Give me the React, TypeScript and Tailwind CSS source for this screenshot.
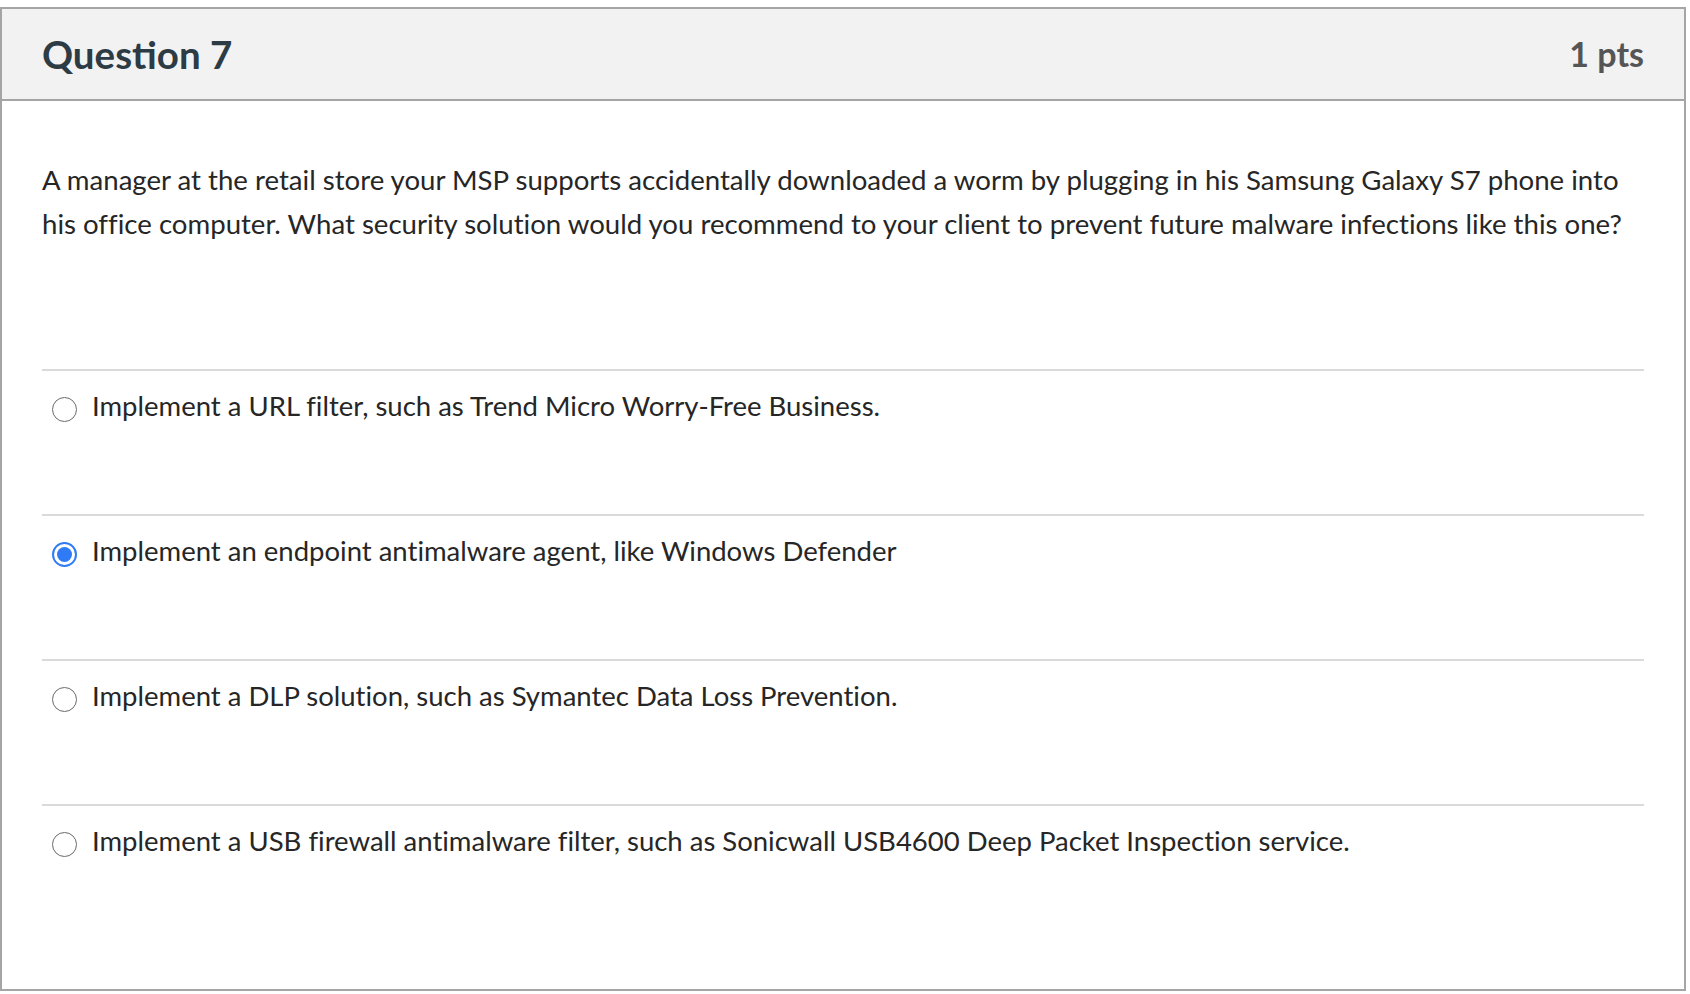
const answers = [
  { text: "Implement a URL filter, such as Trend Micro Worry-Free Business.", checked: false },
  { text: "Implement an endpoint antimalware agent, like Windows Defender", checked: true },
  { text: "Implement a DLP solution, such as Symantec Data Loss Prevention.", checked: false },
  { text: "Implement a USB firewall antimalware filter, such as Sonicwall USB4600 Deep Packet Inspection service.", checked: false },
];

function Radio({ checked }: { checked: boolean }) {
  if (checked) {
    return (
      <span className="w-[25px] h-[25px] shrink-0 rounded-full border-2 border-[#2f7bf5] flex items-center justify-center">
        <span className="w-[15px] h-[15px] rounded-full bg-[#2f7bf5]" />
      </span>
    );
  }
  return <span className="w-[25px] h-[25px] shrink-0 rounded-full border-[1.5px] border-[#6a6a6a] bg-white" />;
}

export default function App() {
  return (
    <div className="min-h-screen bg-white pt-[7px] pr-[4px] font-['Lato','Open_Sans',sans-serif]">
      <div className="border-2 border-[#a5a5a5] bg-white">
        <div className="h-[92px] bg-[#f2f2f2] border-b-2 border-[#a5a5a5] px-10 flex items-center justify-between">
          <h2 className="text-[38.5px] font-bold text-[#2d3b45] leading-none">Question 7</h2>
          <span className="text-[34px] font-bold text-[#555555] leading-none">1 pts</span>
        </div>
        <div className="px-10 pt-[57px] pb-[40px] [font-variant-ligatures:none]">
          <p className="text-[27.6px] leading-[44px] text-[#262626]">
            A manager at the retail store your MSP supports accidentally downloaded a worm by plugging in his Samsung Galaxy S7 phone into his office computer. What security solution would you recommend to your client to prevent future malware infections like this one?
          </p>
          <div className="mt-[123px]">
            {answers.map((a) => (
              <div key={a.text} className="h-[145px] border-t-2 border-[#dadada] pt-[16px]">
                <label className="flex items-center gap-[15px] pl-[10px] h-[44px]">
                  <Radio checked={a.checked} />
                  <span className="text-[27.5px] leading-[44px] pb-[6px] text-[#262626]">{a.text}</span>
                </label>
              </div>
            ))}
          </div>
        </div>
      </div>
    </div>
  );
}
